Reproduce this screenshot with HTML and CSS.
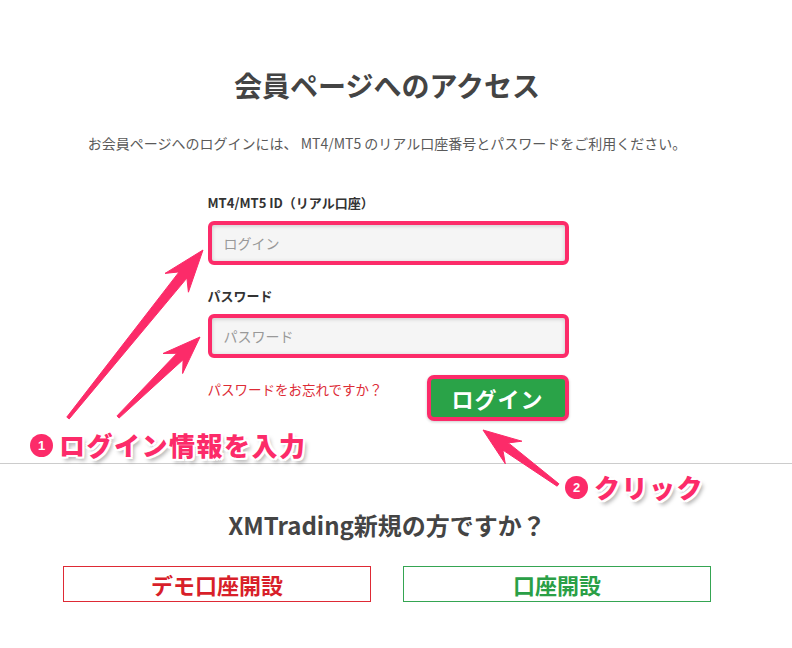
FILE: index.html
```html
<!DOCTYPE html>
<html lang="ja">
<head>
    <meta charset="UTF-8">
    <meta name="viewport" content="width=device-width, initial-scale=1.0">
    <title>会員ページへのアクセス</title>
    <link rel="stylesheet" href="styles.css">
</head>
<body>
<div class="page">
    <div class="wrap">
        <h1 class="title">会員ページへのアクセス</h1>
        <p class="lead">お会員ページへのログインには、 MT4/MT5 のリアル口座番号とパスワードをご利用ください。</p>

        <form class="form" onsubmit="return false;">
            <label class="label" for="login">MT4/MT5 ID（リアル口座）</label>
            <div class="field">
                <input type="text" id="login" placeholder="ログイン">
            </div>

            <label class="label label-pass" for="pass">パスワード</label>
            <div class="field">
                <input type="password" id="pass" placeholder="パスワード">
            </div>

            <div class="actions">
                <a href="#" class="forgot">パスワードをお忘れですか？</a>
                <button type="submit" class="btn-login">ログイン</button>
            </div>
        </form>
    </div>

    <hr class="line">

    <div class="wrap">
        <h2 class="subtitle">XMTrading新規の方ですか？</h2>
        <div class="open-row">
            <a href="#" class="open demo">デモ口座開設</a>
            <a href="#" class="open real">口座開設</a>
        </div>
    </div>

    <!-- annotations -->
    <svg class="arrows" width="792" height="648" viewBox="0 0 792 648">
        <polygon points="203,250 188.4,292.2 186.9,278.1 69.2,418.9 66.8,417.1 179.1,271.9 165,273.4"/>
        <polygon points="200,337 182.6,373.5 183.1,359.7 119,418.1 117,415.9 176.9,353.3 163,353.5"/>
        <polygon points="483,430 521.9,441.2 508.3,442.9 558.9,483.8 557.1,486.2 502.9,450.1 505.3,463.8"/>
    </svg>
    <div class="note note-1"><span class="num">1</span><span class="note-text">ログイン情報を入力</span></div>
    <div class="note note-2"><span class="num">2</span><span class="note-text">クリック</span></div>
</div>
</body>
</html>
```

FILE: styles.css
```css
body{
    margin: 0;
    background: #fff;
    font-family: "Noto Sans CJK JP", "Noto Sans", sans-serif;
    color: #444;
}
.page{
    position: relative;
    width: 792px;
    height: 648px;
    overflow: hidden;
}
.wrap{
    width: 774px;
    display: flex;
    flex-direction: column;
    align-items: center;
}
.title{
    margin: 65px 0 0;
    font-size: 28px;
    line-height: 40px;
    font-weight: bold;
    color: #444;
}
.lead{
    margin: 28px 0 0;
    font-size: 14px;
    line-height: 20px;
    color: #5a5a5a;
}
.form{
    width: 361px;
    margin-top: 40px;
    margin-left: 2px;
    display: flex;
    flex-direction: column;
}
.label{
    font-size: 13px;
    line-height: 20px;
    font-weight: bold;
    color: #333;
}
.label-pass{
    margin-top: 21px;
}
.field{
    margin-top: 8px;
    height: 44px;
    box-sizing: border-box;
    border: 4px solid #fc2b69;
    border-radius: 6px;
    background: #f5f5f5;
    box-shadow: inset 0 1px 4px rgba(0,0,0,0.18);
    display: flex;
}
.field input{
    flex: 1;
    border: none;
    background: transparent;
    outline: none;
    padding: 0 12px;
    font-family: inherit;
    font-size: 14px;
    color: #333;
}
.field input::placeholder{
    color: #999;
}
.actions{
    margin-top: 17px;
    display: flex;
    justify-content: space-between;
    align-items: flex-start;
}
.forgot{
    margin-top: 4px;
    font-size: 13.5px;
    line-height: 20px;
    color: #dd2c36;
    text-decoration: none;
}
.btn-login{
    width: 142px;
    height: 46px;
    box-sizing: border-box;
    border: 4px solid #fc2b69;
    border-radius: 7px;
    background: #2aa348;
    color: #fff;
    font-family: inherit;
    font-size: 22px;
    font-weight: bold;
    letter-spacing: 1px;
    padding: 0;
    box-shadow: 0 1px 3px rgba(0,0,0,0.2);
}
.line{
    margin: 42px 0 0;
    border: none;
    border-top: 1px solid #ccc;
}
.subtitle{
    margin: 45px 0 0;
    font-size: 24px;
    line-height: 32px;
    font-weight: bold;
    color: #444;
}
.open-row{
    margin-top: 25px;
    display: flex;
    gap: 32px;
}
.open{
    width: 308px;
    height: 36px;
    box-sizing: border-box;
    display: flex;
    align-items: center;
    justify-content: center;
    font-size: 22px;
    font-weight: bold;
    text-decoration: none;
}
.demo{
    border: 1px solid #de2a35;
    color: #d81f2a;
}
.real{
    border: 1px solid #35a552;
    color: #2a9f46;
}
.arrows{
    position: absolute;
    left: 0;
    top: 0;
    pointer-events: none;
}
.arrows polygon{
    fill: #fc2b69;
    stroke: #fc2b69;
    stroke-width: 1;
    stroke-linejoin: round;
}
.note{
    position: absolute;
    display: flex;
    align-items: center;
    gap: 6px;
}
.note-1{
    left: 30px;
    top: 428px;
}
.note-2{
    left: 565px;
    top: 470px;
}
.num{
    width: 23px;
    height: 23px;
    border-radius: 50%;
    background: #fc2b69;
    color: #fff;
    font-family: "Liberation Sans", sans-serif;
    font-size: 13px;
    font-weight: bold;
    display: flex;
    align-items: center;
    justify-content: center;
    box-shadow: 0 0 0 2px #fff;
}
.note-text{
    font-size: 26px;
    line-height: 34px;
    font-weight: 900;
    color: #fc2b69;
    letter-spacing: 1.5px;
    text-shadow:
        2px 0 0 #fff, -2px 0 0 #fff, 0 2px 0 #fff, 0 -2px 0 #fff,
        2px 2px 0 #fff, -2px -2px 0 #fff, 2px -2px 0 #fff, -2px 2px 0 #fff,
        3px 4px 4px rgba(0,0,0,0.35);
}
```
